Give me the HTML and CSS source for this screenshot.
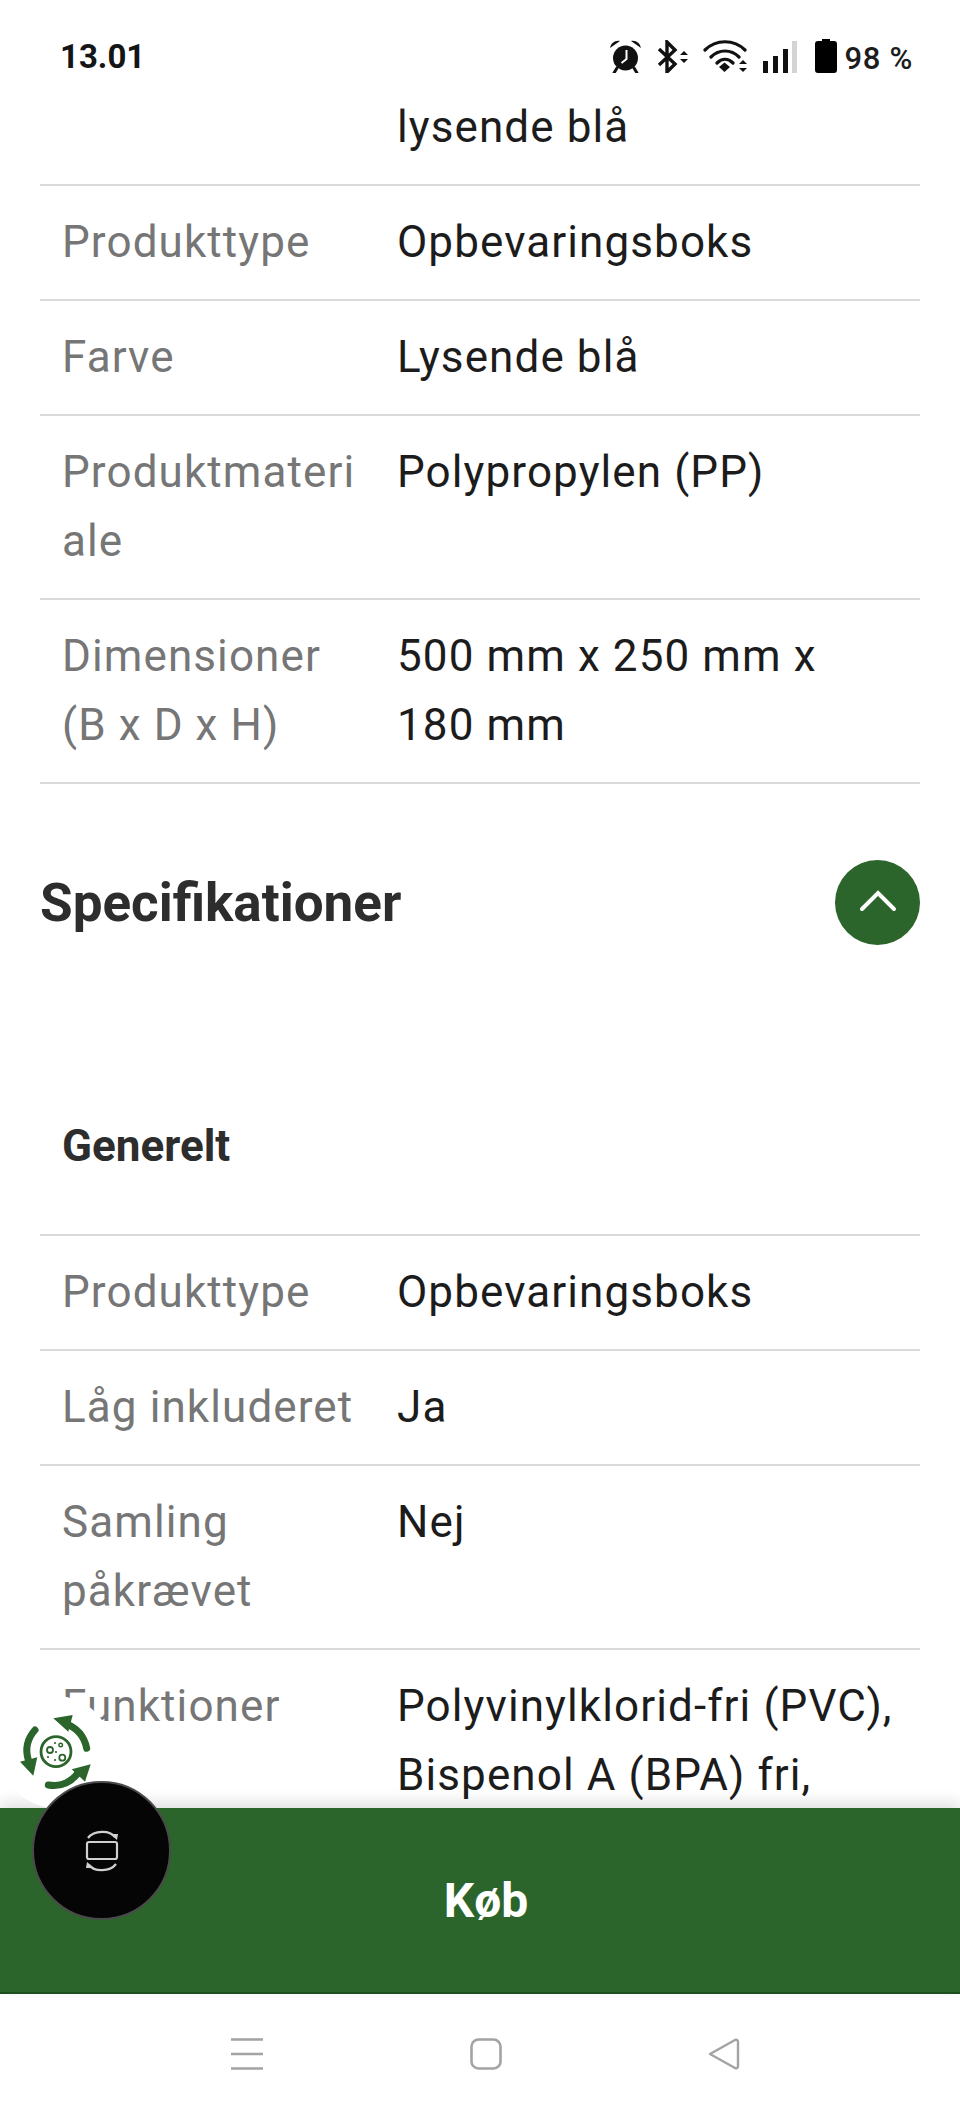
FILE: index.html
```html
<!DOCTYPE html>
<html lang="da">
<head>
  <meta charset="UTF-8" />
  <title>Specifikationer</title>
  <link rel="stylesheet" href="styles.css">
</head>
<body>

<div class="phone">
  <div class="status-bar">
    <span class="time">13.01</span>
    <div class="status-icons">
      <!-- alarm -->
      <svg class="ic-alarm" viewBox="0 0 33 33" width="33" height="33">
        <circle cx="16.500" cy="18" r="12.500" fill="#111"/>
        <path d="M1 8 C2 3 6 0 11 1 Z M32 8 C31 3 27 0 22 1 Z" fill="#111"/>
        <path d="M8 28 L5 33 M25 28 L28 33" stroke="#111" stroke-width="3" stroke-linecap="round"/>
        <path d="M17.500 10 V19 L12.500 23" stroke="#fff" stroke-width="2" fill="none"/>
      </svg>
      <!-- bluetooth -->
      <svg class="ic-bt" viewBox="0 0 31 33" width="31" height="33">
        <path d="M2 9 L18 24 L10 32 V2 L18 10 L2 25" stroke="#111" stroke-width="3.400" fill="none"/>
        <path d="M23 15 L27 11 L31 15 Z M23 19 L27 23 L31 19 Z" fill="#111"/>
      </svg>
      <!-- wifi -->
      <svg class="ic-wifi" viewBox="0 0 45 33" width="45" height="33">
        <path d="M2 10 C13 -1 31 -1 42 10 M8 17 C16 9 28 9 36 17 M14 23 C19 18 25 18 30 23" stroke="#111" stroke-width="3.200" fill="none" stroke-linecap="round"/>
        <path d="M16 27 L21.500 22.500 L27 27 L21.500 32 Z" fill="#111"/>
        <path d="M36 24 L40 20 L44 24 Z M36 28 L40 32 L44 28 Z" fill="#111"/>
      </svg>
      <!-- signal -->
      <svg class="ic-signal" viewBox="0 0 34 32" width="34" height="32">
        <rect x="0" y="20" width="5" height="12" fill="#111"/>
        <rect x="10" y="15" width="5" height="17" fill="#111"/>
        <rect x="20" y="8" width="5" height="24" fill="#111"/>
        <rect x="29" y="0" width="5" height="32" fill="#d4d4d4"/>
      </svg>
      <!-- battery -->
      <svg class="ic-batt" viewBox="0 0 22 34" width="22" height="34">
        <path d="M7 0 H15 V2 H19 Q22 2 22 5 V31 Q22 34 19 34 H3 Q0 34 0 31 V5 Q0 2 3 2 H7 Z" fill="#000"/>
      </svg>
      <span class="battery-text">98 %</span>
    </div>
  </div>

  <div class="content">
    <div class="spec-row no-label">
      <div class="spec-label"></div>
      <div class="spec-value">lysende blå</div>
    </div>
    <div class="spec-row">
      <div class="spec-label">Produkttype</div>
      <div class="spec-value">Opbevaringsboks</div>
    </div>
    <div class="spec-row">
      <div class="spec-label">Farve</div>
      <div class="spec-value">Lysende blå</div>
    </div>
    <div class="spec-row">
      <div class="spec-label">Produktmateriale</div>
      <div class="spec-value">Polypropylen (PP)</div>
    </div>
    <div class="spec-row">
      <div class="spec-label">Dimensioner (B x D x H)</div>
      <div class="spec-value">500 mm x 250 mm x 180 mm</div>
    </div>

    <div class="section-head">
      <h2 class="section-title">Specifikationer</h2>
      <button class="toggle-btn">
        <svg viewBox="0 0 40 24" width="40" height="24">
          <path d="M4 20 L20 4 L36 20" stroke="#fff" stroke-width="4" fill="none" stroke-linecap="round"/>
        </svg>
      </button>
    </div>

    <h3 class="group-title">Generelt</h3>

    <div class="spec-group">
      <div class="spec-row">
        <div class="spec-label">Produkttype</div>
        <div class="spec-value">Opbevaringsboks</div>
      </div>
      <div class="spec-row">
        <div class="spec-label">Låg inkluderet</div>
        <div class="spec-value">Ja</div>
      </div>
      <div class="spec-row">
        <div class="spec-label">Samling påkrævet</div>
        <div class="spec-value">Nej</div>
      </div>
      <div class="spec-row">
        <div class="spec-label">Funktioner</div>
        <div class="spec-value">Polyvinylklorid-fri (PVC), Bispenol A (BPA) fri,</div>
      </div>
    </div>
  </div>

  <div class="buy-bar">Køb</div>

  <div class="nav-bar">
    <svg viewBox="0 0 32 32" width="32" height="32">
      <path d="M0 1.500 H32 M0 16 H32 M0 30.500 H32" stroke="#a3a3a3" stroke-width="2.400"/>
    </svg>
    <svg viewBox="0 0 32 32" width="32" height="32">
      <rect x="1.500" y="1.500" width="29" height="29" rx="7" stroke="#a3a3a3" stroke-width="2.600" fill="none"/>
    </svg>
    <svg viewBox="0 0 32 32" width="32" height="32">
      <path d="M2 16 L27 2 Q30 1 30 4 V28 Q30 31 27 30 L2 16 Z" stroke="#a3a3a3" stroke-width="2.400" fill="none" stroke-linejoin="round"/>
    </svg>
  </div>

  <!-- floating app shortcut -->
  <div class="recycle-badge">
    <svg viewBox="0 0 80 80" width="80" height="80">
      <g fill="none" stroke="#2b652b" stroke-linecap="round">
        <path d="M70.700 36.300 Q67 18 49 11.300" stroke-width="7"/>
        <path d="M19 18 Q7.300 31 12.300 48" stroke-width="7"/>
        <path d="M32.300 73 Q50.700 76 62.300 60.700" stroke-width="7"/>
        <circle cx="40" cy="39.700" r="15" stroke-width="2.800"/>
        <circle cx="34" cy="38" r="3" stroke-width="1.800"/>
        <circle cx="46.300" cy="45.700" r="3" stroke-width="1.800"/>
        <circle cx="44.700" cy="33" r="1.800" stroke-width="1.400"/>
      </g>
      <g fill="#2b652b">
        <path d="M37.300 6.300 L56.700 3 L52.300 19.700 Z"/>
        <path d="M4 49.700 L21.300 45.300 L17.300 63.700 Z"/>
        <path d="M55.700 57.300 L74.700 52.300 L69 69.700 Z"/>
        <circle cx="39" cy="31" r="1.100"/>
        <circle cx="40" cy="40" r="1.100"/>
        <circle cx="32" cy="45" r="1.100"/>
        <circle cx="39" cy="48" r="1.100"/>
      </g>
    </svg>
  </div>
  <div class="float-btn">
    <svg viewBox="0 0 36 42" width="36" height="42">
      <g stroke="#d0d0d0" fill="none" stroke-width="2.200">
        <rect x="3" y="12" width="30" height="17" rx="2"/>
        <path d="M4 8 C10 0 26 0 31 7"/>
        <path d="M32 34 C26 42 10 42 5 35"/>
      </g>
      <path d="M26 4 L34 4 L33 10 Z M10 38 L2 38 L3 32 Z" fill="#d0d0d0"/>
    </svg>
  </div>
</div>

</body>
</html>
```

FILE: styles.css
```css
* {
  box-sizing: border-box;
}
html, body {
  margin: 0;
  padding: 0;
}
body {
  font-family: Roboto, Arial, sans-serif;
  background: #fff;
}
.phone {
  position: relative;
  width: 960px;
  height: 2112px;
  overflow: hidden;
  display: flex;
  flex-direction: column;
  background: #fff;
}
.status-bar {
  height: 93px;
  flex: none;
  display: flex;
  justify-content: space-between;
  padding: 38px 47px 0 60px;
}
.time {
  font-size: 33px;
  font-weight: 700;
  line-height: 38px;
  color: #151515;
}
.status-icons {
  display: flex;
  align-items: flex-start;
  height: 38px;
  margin-top: 2px;
}
.ic-alarm, .ic-bt, .ic-wifi {
  margin-right: 15px;
}
.ic-signal {
  margin-right: 18px;
  margin-top: 1px;
}
.ic-batt {
  margin-right: 7px;
  margin-top: -1px;
}
.battery-text {
  font-size: 31px;
  line-height: 38px;
  font-weight: 500;
  letter-spacing: 0.7px;
  color: #1c1c1c;
}
.content {
  flex: 1;
  min-height: 0;
  overflow: hidden;
  padding: 0 40px;
}
.spec-row {
  display: grid;
  grid-template-columns: 357px 1fr;
  padding: 22px 0;
  border-bottom: 2px solid #d9d9d9;
  font-size: 44px;
  line-height: 69px;
  letter-spacing: 1.1px;
}
.no-label {
  padding-top: 0;
}
.spec-label {
  padding-left: 22px;
  padding-right: 32px;
  color: #767676;
  overflow-wrap: anywhere;
}
.spec-value {
  color: #1c1c1c;
  padding-right: 27px;
}
.section-head {
  display: flex;
  justify-content: space-between;
  align-items: center;
  margin-top: 76px;
}
.section-title {
  margin: 0;
  font-size: 53px;
  line-height: 84px;
  font-weight: 700;
  color: #2d2d2d;
}
.toggle-btn {
  width: 85px;
  height: 85px;
  border: none;
  border-radius: 50%;
  background: #2b652b;
  padding: 0 0 4px;
  display: flex;
  align-items: center;
  justify-content: center;
}
.group-title {
  margin: 0;
  padding: 171px 22px 0;
  font-size: 44px;
  line-height: 60px;
  font-weight: 700;
  color: #2d2d2d;
}
.spec-group {
  margin-top: 58px;
  border-top: 2px solid #d9d9d9;
}
.buy-bar {
  position: relative;
  height: 186px;
  flex: none;
  display: flex;
  align-items: center;
  justify-content: center;
  padding-left: 12px;
  background: #2b652b;
  border-bottom: 2px solid #1f4f1f;
  box-shadow: 0 -6px 14px rgba(0,0,0,0.12);
  color: #fff;
  font-size: 48px;
  font-weight: 700;
}
.nav-bar {
  height: 118px;
  flex: none;
  display: flex;
  align-items: center;
  justify-content: space-between;
  padding: 2px 220px 0 231px;
  background: #fff;
}
.recycle-badge {
  position: absolute;
  left: 0;
  top: 1696px;
  width: 112px;
  height: 112px;
  padding: 16px;
  border-radius: 50%;
  background: #fff;
}
.float-btn {
  position: absolute;
  left: 32px;
  top: 1781px;
  width: 139px;
  height: 139px;
  border-radius: 50%;
  background: #050505;
  border: 2px solid #4a4a4a;
  display: flex;
  align-items: center;
  justify-content: center;
}
```
